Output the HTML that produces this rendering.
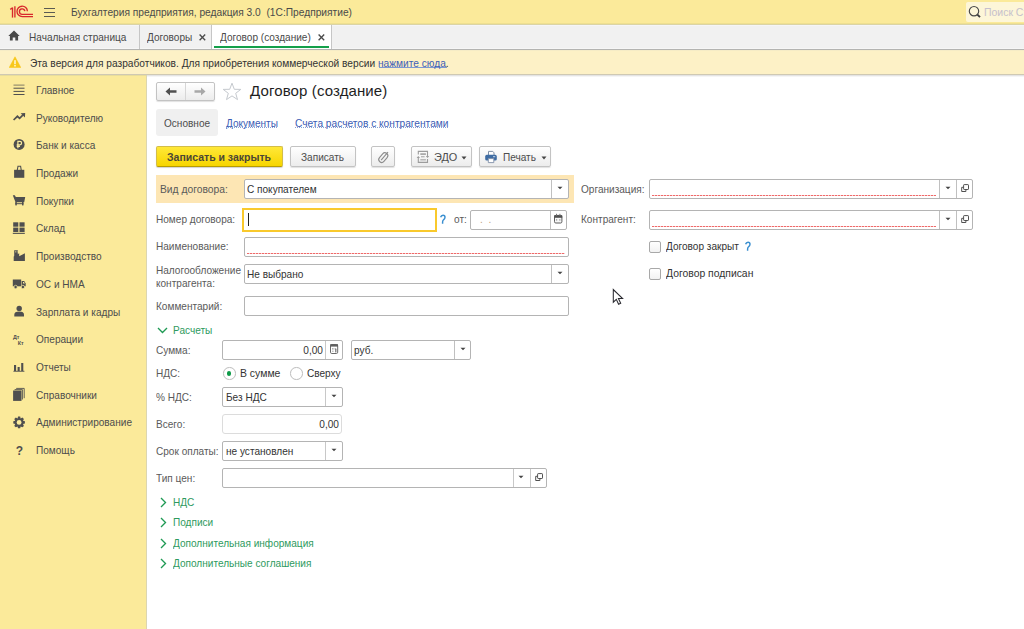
<!DOCTYPE html>
<html><head><meta charset="utf-8"><style>
html,body{margin:0;padding:0;width:1024px;height:629px;overflow:hidden;background:#fff;font-family:'Liberation Sans', sans-serif;}
.t{position:absolute;white-space:nowrap;font-family:'Liberation Sans', sans-serif;}
</style></head><body>
<div style="position:absolute;left:0px;top:0px;width:1024px;height:23px;background:#fbea9a"></div><div style="position:absolute;left:0px;top:23px;width:1024px;height:1px;background:#efe090"></div><div style="position:absolute;left:0px;top:24px;width:1024px;height:1px;background:#dbd4a6"></div><svg style="position:absolute;left:8px;top:4px;" width="28" height="16" viewBox="0 0 28 16"><g fill="none" stroke="#d8282c" stroke-width="1.35" stroke-linecap="butt">
<path d="M2.2 5.4 L4.6 3.9"/>
<path d="M4.5 3.6 L4.5 13.6"/>
<path d="M6.9 2.2 L6.9 13.6"/>
<path d="M19.4 7.2 A5.2 5.2 0 1 0 14.2 12.6 L25 12.6"/>
<path d="M16.8 7.2 A2.7 2.7 0 1 0 14.2 10.3 L25 10.3"/>
</g></svg><div style="position:absolute;left:44px;top:8px;width:11px;height:1px;background:#5a5a52"></div><div style="position:absolute;left:44px;top:12px;width:11px;height:1px;background:#5a5a52"></div><div style="position:absolute;left:44px;top:16px;width:11px;height:1px;background:#5a5a52"></div><div class="t" style="left:71px;top:6px;font-size:11px;line-height:13px;color:#4a4a4a;letter-spacing:0px;font-weight:normal;transform:scaleX(0.928);transform-origin:0 0;">Бухгалтерия предприятия, редакция 3.0&nbsp; (1С:Предприятие)</div><div style="position:absolute;left:966px;top:2px;width:58px;height:20px;background:#fdf6d8;border-radius:2px 0 0 2px"></div><svg style="position:absolute;left:968px;top:5px;" width="14" height="14" viewBox="0 0 14 14"><circle cx="6" cy="6.2" r="4.7" fill="none" stroke="#484848" stroke-width="1.15"/><path d="M9.4 9.6 L12 12.2" stroke="#3c3c3c" stroke-width="1.9"/></svg><div class="t" style="left:984px;top:6px;font-size:11px;line-height:13px;color:#c6c0cc;letter-spacing:0px;font-weight:normal;transform:scaleX(0.95);transform-origin:0 0;">Поиск Ст</div><div style="position:absolute;left:0px;top:25px;width:1024px;height:24px;background:#f1f1f1"></div><div style="position:absolute;left:0px;top:25px;width:1024px;height:1px;background:#f5f5f7"></div><div style="position:absolute;left:0px;top:48px;width:1024px;height:1px;background:#f6f6f6"></div><div style="position:absolute;left:0px;top:49px;width:1024px;height:1px;background:#b4b4b1"></div><div style="position:absolute;left:139px;top:25px;width:1px;height:24px;background:#c6c6c6"></div><div style="position:absolute;left:211px;top:25px;width:1px;height:24px;background:#c6c6c6"></div><div style="position:absolute;left:212px;top:25px;width:119px;height:24px;background:#fff"></div><div style="position:absolute;left:331px;top:25px;width:1px;height:24px;background:#c6c6c6"></div><div style="position:absolute;left:214px;top:46px;width:115px;height:2px;background:#14a04a"></div><svg style="position:absolute;left:8px;top:30px;" width="12" height="11" viewBox="0 0 12 11"><path d="M6 0.6 L11.7 5.9 L10.1 5.9 L10.1 10.4 L7.3 10.4 L7.3 7.4 L4.7 7.4 L4.7 10.4 L1.9 10.4 L1.9 5.9 L0.3 5.9 Z" fill="#484848"/></svg><div class="t" style="left:29px;top:31px;font-size:11px;line-height:13px;color:#4a4a4a;letter-spacing:0px;font-weight:normal;transform:scaleX(0.915);transform-origin:0 0;">Начальная страница</div><div class="t" style="left:147px;top:31px;font-size:11px;line-height:13px;color:#4a4a4a;letter-spacing:0px;font-weight:normal;transform:scaleX(0.915);transform-origin:0 0;">Договоры</div><svg style="position:absolute;left:199px;top:34px;" width="7" height="7" viewBox="0 0 7 7"><path d="M0.6 0.6 L6.2 6.2 M6.2 0.6 L0.6 6.2" stroke="#4a4a4a" stroke-width="1.35"/></svg><div class="t" style="left:220px;top:31px;font-size:11px;line-height:13px;color:#4a4a4a;letter-spacing:0px;font-weight:normal;transform:scaleX(0.915);transform-origin:0 0;">Договор (создание)</div><svg style="position:absolute;left:318px;top:34px;" width="7" height="7" viewBox="0 0 7 7"><path d="M0.6 0.6 L6.2 6.2 M6.2 0.6 L0.6 6.2" stroke="#4a4a4a" stroke-width="1.35"/></svg><div style="position:absolute;left:0px;top:50px;width:1024px;height:24px;background:#fdf1c6"></div><div style="position:absolute;left:0px;top:50px;width:1024px;height:1px;background:#f6ecc6"></div><div style="position:absolute;left:0px;top:74px;width:1024px;height:1px;background:#cfc9b3"></div><div style="position:absolute;left:379px;top:67px;width:68px;height:1px;background:#7c98d2"></div><svg style="position:absolute;left:9px;top:56px;" width="12" height="12" viewBox="0 0 12 12"><path d="M6 0.8 L11.8 11.6 L0.2 11.6 Z" fill="#f8c81c" stroke="#f8c81c" stroke-width="0.6" stroke-linejoin="round"/><rect x="5.2" y="4.2" width="1.6" height="4" fill="#fff6d0"/><rect x="5.2" y="9" width="1.6" height="1.5" fill="#fff6d0"/></svg><div class="t" style="left:30px;top:57px;font-size:11px;line-height:13px;color:#333;letter-spacing:0px;font-weight:normal;transform:scaleX(0.925);transform-origin:0 0;">Эта версия для разработчиков. Для приобретения коммерческой версии <span style="color:#3d60b6">нажмите сюда</span>.</div><div style="position:absolute;left:0px;top:75px;width:146px;height:554px;background:#fbea9a"></div><div style="position:absolute;left:146px;top:75px;width:1px;height:554px;background:#dcd6b0"></div><div style="position:absolute;left:0px;top:75px;width:146px;height:1px;background:#e8dd9c"></div><div class="t" style="left:36px;top:84px;font-size:11px;line-height:13px;color:#4d4d4d;letter-spacing:0px;font-weight:normal;transform:scaleX(0.915);transform-origin:0 0;">Главное</div><div class="t" style="left:36px;top:112px;font-size:11px;line-height:13px;color:#4d4d4d;letter-spacing:0px;font-weight:normal;transform:scaleX(0.915);transform-origin:0 0;">Руководителю</div><div class="t" style="left:36px;top:139px;font-size:11px;line-height:13px;color:#4d4d4d;letter-spacing:0px;font-weight:normal;transform:scaleX(0.915);transform-origin:0 0;">Банк и касса</div><div class="t" style="left:36px;top:167px;font-size:11px;line-height:13px;color:#4d4d4d;letter-spacing:0px;font-weight:normal;transform:scaleX(0.915);transform-origin:0 0;">Продажи</div><div class="t" style="left:36px;top:195px;font-size:11px;line-height:13px;color:#4d4d4d;letter-spacing:0px;font-weight:normal;transform:scaleX(0.915);transform-origin:0 0;">Покупки</div><div class="t" style="left:36px;top:222px;font-size:11px;line-height:13px;color:#4d4d4d;letter-spacing:0px;font-weight:normal;transform:scaleX(0.915);transform-origin:0 0;">Склад</div><div class="t" style="left:36px;top:250px;font-size:11px;line-height:13px;color:#4d4d4d;letter-spacing:0px;font-weight:normal;transform:scaleX(0.915);transform-origin:0 0;">Производство</div><div class="t" style="left:36px;top:278px;font-size:11px;line-height:13px;color:#4d4d4d;letter-spacing:0px;font-weight:normal;transform:scaleX(0.915);transform-origin:0 0;">ОС и НМА</div><div class="t" style="left:36px;top:306px;font-size:11px;line-height:13px;color:#4d4d4d;letter-spacing:0px;font-weight:normal;transform:scaleX(0.915);transform-origin:0 0;">Зарплата и кадры</div><div class="t" style="left:36px;top:333px;font-size:11px;line-height:13px;color:#4d4d4d;letter-spacing:0px;font-weight:normal;transform:scaleX(0.915);transform-origin:0 0;">Операции</div><div class="t" style="left:36px;top:361px;font-size:11px;line-height:13px;color:#4d4d4d;letter-spacing:0px;font-weight:normal;transform:scaleX(0.915);transform-origin:0 0;">Отчеты</div><div class="t" style="left:36px;top:389px;font-size:11px;line-height:13px;color:#4d4d4d;letter-spacing:0px;font-weight:normal;transform:scaleX(0.915);transform-origin:0 0;">Справочники</div><div class="t" style="left:36px;top:416px;font-size:11px;line-height:13px;color:#4d4d4d;letter-spacing:0px;font-weight:normal;transform:scaleX(0.915);transform-origin:0 0;">Администрирование</div><div class="t" style="left:36px;top:444px;font-size:11px;line-height:13px;color:#4d4d4d;letter-spacing:0px;font-weight:normal;transform:scaleX(0.915);transform-origin:0 0;">Помощь</div><svg style="position:absolute;left:0;top:0" width="146" height="629" viewBox="0 0 146 629"><g fill="#4f4f4f">
<rect x="13.5" y="84.6" width="11" height="1" opacity="0.7"/><rect x="13.5" y="87.7" width="11" height="1"/><rect x="13.5" y="90.9" width="11" height="1"/><rect x="13.5" y="94" width="11" height="1"/>
<path d="M13.6 120 L17.4 116.3 L19.6 118.4 L22.8 115.2" fill="none" stroke="#4f4f4f" stroke-width="1.7"/>
<path d="M20.6 113.2 L25.2 112.9 L24.9 117.4 Z"/>
<circle cx="19.1" cy="144.4" r="5.5"/>
<path d="M17.9 148.3 L17.9 141.4 L19.9 141.4 Q21.6 141.4 21.6 143.1 Q21.6 144.8 19.9 144.8 L16.7 144.8 M16.7 146.3 L20 146.3" fill="none" stroke="#fbec9e" stroke-width="1.2"/>
<path d="M14.1 169.8 L24.3 169.8 L24.3 177.8 L14.1 177.8 Z"/>
<path d="M17.2 170.5 L18 166.2 L20.6 166.2 L21.3 170.5" fill="none" stroke="#4f4f4f" stroke-width="1.1"/>
<path d="M12.8 195.3 L14.8 195.3 L15.8 197 L25.2 197 L24.2 202.2 L15.5 202.2 Z"/>
<rect x="15.3" y="202" width="1.5" height="3.4"/><rect x="22" y="202" width="1.5" height="3.4"/><rect x="15.3" y="203.2" width="8.2" height="1"/>
<rect x="13.2" y="222.3" width="5.1" height="4.4"/><rect x="19.5" y="222.3" width="5.1" height="4.4"/>
<rect x="13.2" y="227.6" width="5.1" height="4.4"/><rect x="19.5" y="227.6" width="5.1" height="4.4"/>
<rect x="12.8" y="232.8" width="12" height="1.1"/>
<path d="M13.7 260.9 L13.7 256.6 L19.2 253.2 L19.2 256.3 L24.9 253.2 L24.9 260.9 Z"/>
<path d="M14.2 250.3 L17.8 250.3 L17.8 255.3 L14.2 257.6 Z"/>
<rect x="15" y="251.3" width="0.9" height="1.1" fill="#fbec9e" opacity="0.8"/><rect x="16.6" y="251.3" width="0.9" height="1.1" fill="#fbec9e" opacity="0.8"/>
<rect x="12.8" y="279.5" width="8.4" height="6.8"/>
<path d="M21.7 281 L24.2 281 L25.7 283.4 L25.7 286.3 L21.7 286.3 Z"/>
<path d="M23 282 L24 282 L24.9 283.6 L23 283.6 Z" fill="#fbec9e"/>
<circle cx="15.6" cy="287" r="1.7" stroke="#fbec9e" stroke-width="0.7"/><circle cx="22.9" cy="287" r="1.7" stroke="#fbec9e" stroke-width="0.7"/>
<circle cx="19.2" cy="308.4" r="2.7"/>
<path d="M14.3 316.4 L14.3 314.8 Q14.3 311.5 19.2 311.5 Q24 311.5 24 314.8 L24 316.4 Z"/>
<text x="13" y="338.5" font-size="5.4" font-family="Liberation Sans" font-weight="bold">Дт</text>
<text x="17.8" y="344.8" font-size="5.4" font-family="Liberation Sans" font-weight="bold">Кт</text>
<rect x="14" y="365" width="2.1" height="6"/><rect x="17.6" y="367" width="2.1" height="4"/><rect x="21.2" y="363" width="2.1" height="8"/><rect x="13.4" y="370.8" width="11" height="0.9"/>
<rect x="13.1" y="390.5" width="8.4" height="10.4"/>
<path d="M14.6 389.6 L22.4 389.6 L22.4 399.5 M16.2 388.4 L24.2 388.4 L24.2 398.2" fill="none" stroke="#4f4f4f" stroke-width="0.9"/>
<g transform="translate(19.1 422.4)"><path d="M-1.1 -5.8 L1.1 -5.8 L1.5 -4 L3.3 -5 L4.8 -3.5 L3.9 -1.7 L5.8 -1.1 L5.8 1.1 L3.9 1.6 L4.8 3.5 L3.3 4.9 L1.5 4 L1.1 5.8 L-1.1 5.8 L-1.5 4 L-3.3 4.9 L-4.8 3.5 L-3.9 1.6 L-5.8 1.1 L-5.8 -1.1 L-3.9 -1.7 L-4.8 -3.5 L-3.3 -5 L-1.5 -4 Z"/><circle r="2.4" fill="#fbec9e"/></g>
<text x="15.8" y="454.8" font-size="12" font-family="Liberation Sans" font-weight="bold">?</text>
</g></svg><div style="position:absolute;left:147px;top:75px;width:877px;height:554px;background:#fff"></div><div style="position:absolute;left:147px;top:75px;width:877px;height:1px;background:#e4e4e4"></div><div style="position:absolute;left:147px;top:76px;width:877px;height:1px;background:#f5f5f5"></div><div style="position:absolute;left:156px;top:82px;width:59px;height:19px;background:linear-gradient(#ffffff,#ececec);border:1px solid #c3c3c3;border-radius:2px;box-shadow:0 1px 1px rgba(0,0,0,0.12);box-sizing:border-box"></div><div style="position:absolute;left:185px;top:83px;width:1px;height:17px;background:#d6d6d6"></div><svg style="position:absolute;left:165px;top:87px;" width="12" height="9" viewBox="0 0 12 9"><path d="M0.5 4.5 L5 0.5 L5 3.2 L11.5 3.2 L11.5 5.8 L5 5.8 L5 8.5 Z" fill="#505050"/></svg><svg style="position:absolute;left:194px;top:87px;" width="12" height="9" viewBox="0 0 12 9"><path d="M11.5 4.5 L7 0.5 L7 3.2 L0.5 3.2 L0.5 5.8 L7 5.8 L7 8.5 Z" fill="#a8a8a8"/></svg><svg style="position:absolute;left:222px;top:82px;" width="20" height="19" viewBox="0 0 20 19"><path d="M10 1.2 L12.3 7.3 L18.8 7.4 L13.7 11.3 L15.5 17.6 L10 13.9 L4.5 17.6 L6.3 11.3 L1.2 7.4 L7.7 7.3 Z" fill="none" stroke="#c5c9ce" stroke-width="1"/></svg><div class="t" style="left:250px;top:82px;font-size:15px;line-height:18px;color:#1e1e1e;letter-spacing:0.12px;font-weight:normal;">Договор (создание)</div><div style="position:absolute;left:156px;top:109px;width:62px;height:27px;background:#f0f0f0;border-radius:3px"></div><div class="t" style="left:164px;top:117px;font-size:11px;line-height:13px;color:#4d4d4d;letter-spacing:0px;font-weight:normal;transform:scaleX(0.915);transform-origin:0 0;">Основное</div><div class="t" style="left:226px;top:117px;font-size:11px;line-height:13px;color:#3b5cb4;letter-spacing:0px;font-weight:normal;transform:scaleX(0.915);transform-origin:0 0;">Документы</div><div class="t" style="left:295px;top:117px;font-size:11px;line-height:13px;color:#3b5cb4;letter-spacing:0px;font-weight:normal;transform:scaleX(0.924);transform-origin:0 0;">Счета расчетов с контрагентами</div><div style="position:absolute;left:226px;top:127px;width:52px;height:1px;background:repeating-linear-gradient(90deg,#8aa2d4 0 1px,transparent 1px 2px)"></div><div style="position:absolute;left:295px;top:127px;width:153px;height:1px;background:repeating-linear-gradient(90deg,#8aa2d4 0 1px,transparent 1px 2px)"></div><div style="position:absolute;left:156px;top:146px;width:127px;height:21px;background:linear-gradient(#ffe838,#f7d500);border:1px solid #d3bd48;border-bottom-color:#b89c00;border-radius:2px;box-shadow:0 1px 1px rgba(0,0,0,0.18);box-sizing:border-box"></div><div class="t" style="left:167px;top:151px;font-size:11px;line-height:13px;color:#4a4636;letter-spacing:0px;font-weight:bold;transform:scaleX(0.954);transform-origin:0 0;">Записать и закрыть</div><div style="position:absolute;left:290px;top:146px;width:66px;height:21px;background:linear-gradient(#ffffff,#ececec);border:1px solid #c3c3c3;border-radius:2px;box-shadow:0 1px 1px rgba(0,0,0,0.12);box-sizing:border-box"></div><div class="t" style="left:301px;top:151px;font-size:11px;line-height:13px;color:#4d4d4d;letter-spacing:0px;font-weight:normal;transform:scaleX(0.915);transform-origin:0 0;">Записать</div><div style="position:absolute;left:371px;top:146px;width:24px;height:21px;background:linear-gradient(#ffffff,#ececec);border:1px solid #c3c3c3;border-radius:2px;box-shadow:0 1px 1px rgba(0,0,0,0.12);box-sizing:border-box"></div><svg style="position:absolute;left:374px;top:148px;" width="18" height="18" viewBox="0 0 18 18"><g transform="translate(9.3 9.6) rotate(-50)"><rect x="-5.4" y="-2.9" width="10.8" height="5.8" rx="2.9" fill="none" stroke="#8c8c8c" stroke-width="1.1"/><path d="M-3.4 0 L7.2 0" stroke="#8c8c8c" stroke-width="1.1"/></g></svg><div style="position:absolute;left:411px;top:146px;width:61px;height:21px;background:linear-gradient(#ffffff,#ececec);border:1px solid #c3c3c3;border-radius:2px;box-shadow:0 1px 1px rgba(0,0,0,0.12);box-sizing:border-box"></div><svg style="position:absolute;left:414px;top:148px;" width="18" height="18" viewBox="0 0 18 18"><g fill="none" stroke="#9c9c9c" stroke-width="1.1"><path d="M4.3 6.5 L4.3 3.4 L13.5 3.4 L13.5 8"/><path d="M13.5 11 L13.5 14.4 L4.3 14.4 L4.3 10"/></g><g fill="#9c9c9c"><path d="M11.8 8 L15.2 8 L13.5 10 Z"/><path d="M2.6 10 L6 10 L4.3 8 Z"/><rect x="6.3" y="5.2" width="5.6" height="1.8" opacity="0.85"/><rect x="7" y="8.2" width="3.6" height="1.1" opacity="0.85"/><rect x="6.3" y="11.2" width="5.6" height="1.2" opacity="0.85"/></g></svg><div class="t" style="left:434px;top:151px;font-size:11px;line-height:13px;color:#4d4d4d;letter-spacing:0px;font-weight:normal;transform:scaleX(0.99);transform-origin:0 0;">ЭДО</div><svg style="position:absolute;left:461px;top:156px;" width="6" height="4" viewBox="0 0 6 4"><path d="M0.5 0.5 L5.5 0.5 L3 3.5 Z" fill="#444"/></svg><div style="position:absolute;left:479px;top:146px;width:72px;height:21px;background:linear-gradient(#ffffff,#ececec);border:1px solid #c3c3c3;border-radius:2px;box-shadow:0 1px 1px rgba(0,0,0,0.12);box-sizing:border-box"></div><svg style="position:absolute;left:482px;top:148px;" width="18" height="18" viewBox="0 0 18 18"><path d="M6.5 7 L6.5 3.4 L10.8 3.4 L12 4.8 L12 7" fill="#fff" stroke="#7d8ea6" stroke-width="1"/><rect x="3.2" y="6.8" width="11.6" height="5.8" rx="1.6" fill="#3f6ca3"/><rect x="11" y="8.2" width="2.2" height="1" fill="#c8d6e8"/><path d="M6.3 10.6 L11.8 10.6 L11.8 14.6 L6.3 14.6 Z" fill="#fff" stroke="#8090a8" stroke-width="0.9"/></svg><div class="t" style="left:503px;top:151px;font-size:11px;line-height:13px;color:#4d4d4d;letter-spacing:0px;font-weight:normal;transform:scaleX(0.915);transform-origin:0 0;">Печать</div><svg style="position:absolute;left:541px;top:156px;" width="6" height="4" viewBox="0 0 6 4"><path d="M0.5 0.5 L5.5 0.5 L3 3.5 Z" fill="#444"/></svg><div style="position:absolute;left:156px;top:175px;width:418px;height:28px;background:#fde6b4"></div><div class="t" style="left:160px;top:183px;font-size:11px;line-height:13px;color:#5a5a5a;letter-spacing:0px;font-weight:normal;transform:scaleX(0.935);transform-origin:0 0;">Вид договора:</div><div style="position:absolute;left:244px;top:179px;width:325px;height:20px;background:#fff;border:1px solid #b4b4b4;border-radius:2px;box-sizing:border-box"></div><div style="position:absolute;left:551px;top:180px;width:1px;height:18px;background:#c0c0c0"></div><svg style="position:absolute;left:557px;top:186px;" width="6" height="4" viewBox="0 0 6 4"><path d="M0.5 0.8 L5.5 0.8 L3 3.3 Z" fill="#444"/></svg><div class="t" style="left:247px;top:183px;font-size:11px;line-height:13px;color:#333333;letter-spacing:0px;font-weight:normal;transform:scaleX(0.915);transform-origin:0 0;">С покупателем</div><div class="t" style="left:156px;top:213px;font-size:11px;line-height:13px;color:#5a5a5a;letter-spacing:0px;font-weight:normal;transform:scaleX(0.915);transform-origin:0 0;">Номер договора:</div><div style="position:absolute;left:242px;top:208px;width:195px;height:24px;border:2px solid #f9c92c;background:#fff;box-sizing:border-box"></div><div style="position:absolute;left:248px;top:213px;width:1px;height:13px;background:#222"></div><svg style="position:absolute;left:439px;top:214px;" width="8" height="11" viewBox="0 0 8 11"><path d="M1.6 3.3 Q2.2 1.2 4 1.2 Q6 1.2 6 3.3 Q6 4.8 4.5 5.8 Q3.6 6.5 3.6 8 L3.6 9.8" fill="none" stroke="#3a8fd0" stroke-width="1.45"/></svg><div class="t" style="left:454px;top:213px;font-size:11px;line-height:13px;color:#5a5a5a;letter-spacing:0px;font-weight:normal;transform:scaleX(0.915);transform-origin:0 0;">от:</div><div style="position:absolute;left:470px;top:210px;width:97px;height:20px;background:#fff;border:1px solid #b4b4b4;border-radius:2px;box-sizing:border-box"></div><div style="position:absolute;left:550px;top:211px;width:1px;height:18px;background:#c0c0c0"></div><div class="t" style="left:480px;top:213px;font-size:11px;line-height:13px;color:#c0a080;letter-spacing:0px;font-weight:normal;transform:scaleX(0.915);transform-origin:0 0;">.&nbsp;&nbsp;.</div><svg style="position:absolute;left:553px;top:213px;" width="10" height="11" viewBox="0 0 10 11"><rect x="1.5" y="2.4" width="7.4" height="7.6" rx="1.3" fill="#f6f6f6" stroke="#5c5c5c" stroke-width="1"/><rect x="1.2" y="2.2" width="8" height="2.6" fill="#505050"/><rect x="3" y="0.8" width="1" height="2" fill="#777"/><rect x="6.4" y="0.8" width="1" height="2" fill="#777"/><rect x="3" y="6.3" width="1.2" height="1.2" fill="#8a8a8a"/><rect x="6.2" y="6.3" width="1.2" height="1.2" fill="#8a8a8a"/></svg><div class="t" style="left:156px;top:240px;font-size:11px;line-height:13px;color:#5a5a5a;letter-spacing:0px;font-weight:normal;transform:scaleX(0.915);transform-origin:0 0;">Наименование:</div><div style="position:absolute;left:244px;top:237px;width:325px;height:20px;background:#fff;border:1px solid #b4b4b4;border-radius:2px;box-sizing:border-box"></div><div style="position:absolute;left:247px;top:253px;width:318px;height:1px;background:repeating-linear-gradient(90deg,#ef6a6a 0 2px,#f9d0d0 2px 3px)"></div><div class="t" style="left:156px;top:264px;font-size:11px;line-height:13px;color:#5a5a5a;letter-spacing:0px;font-weight:normal;transform:scaleX(0.915);transform-origin:0 0;">Налогообложение</div><div class="t" style="left:156px;top:277px;font-size:11px;line-height:13px;color:#5a5a5a;letter-spacing:0px;font-weight:normal;transform:scaleX(0.915);transform-origin:0 0;">контрагента:</div><div style="position:absolute;left:244px;top:264px;width:325px;height:20px;background:#fff;border:1px solid #b4b4b4;border-radius:2px;box-sizing:border-box"></div><div style="position:absolute;left:551px;top:265px;width:1px;height:18px;background:#c0c0c0"></div><svg style="position:absolute;left:557px;top:271px;" width="6" height="4" viewBox="0 0 6 4"><path d="M0.5 0.8 L5.5 0.8 L3 3.3 Z" fill="#444"/></svg><div class="t" style="left:247px;top:268px;font-size:11px;line-height:13px;color:#333333;letter-spacing:0px;font-weight:normal;transform:scaleX(0.915);transform-origin:0 0;">Не выбрано</div><div class="t" style="left:156px;top:300px;font-size:11px;line-height:13px;color:#5a5a5a;letter-spacing:0px;font-weight:normal;transform:scaleX(0.915);transform-origin:0 0;">Комментарий:</div><div style="position:absolute;left:244px;top:296px;width:325px;height:20px;background:#fff;border:1px solid #b4b4b4;border-radius:2px;box-sizing:border-box"></div><div class="t" style="left:581px;top:183px;font-size:11px;line-height:13px;color:#5a5a5a;letter-spacing:0px;font-weight:normal;transform:scaleX(0.915);transform-origin:0 0;">Организация:</div><div style="position:absolute;left:649px;top:179px;width:324px;height:20px;background:#fff;border:1px solid #b4b4b4;border-radius:2px;box-sizing:border-box"></div><div style="position:absolute;left:939px;top:180px;width:1px;height:18px;background:#c0c0c0"></div><div style="position:absolute;left:956px;top:180px;width:1px;height:18px;background:#c0c0c0"></div><svg style="position:absolute;left:945px;top:186px;" width="6" height="4" viewBox="0 0 6 4"><path d="M0.5 0.8 L5.5 0.8 L3 3.3 Z" fill="#444"/></svg><svg style="position:absolute;left:961px;top:184px;" width="9" height="9" viewBox="0 0 9 9"><g fill="none" stroke="#505050" stroke-width="1"><path d="M2.6 3.3 L0.7 3.3 L0.7 7.5 L4.9 7.5 L4.9 5.6"/><rect x="2.6" y="0.6" width="4.9" height="4.9" rx="0.6"/></g></svg><div style="position:absolute;left:652px;top:195px;width:284px;height:1px;background:repeating-linear-gradient(90deg,#ef6a6a 0 2px,#f9d0d0 2px 3px)"></div><div class="t" style="left:581px;top:213px;font-size:11px;line-height:13px;color:#5a5a5a;letter-spacing:0px;font-weight:normal;transform:scaleX(0.915);transform-origin:0 0;">Контрагент:</div><div style="position:absolute;left:649px;top:210px;width:324px;height:20px;background:#fff;border:1px solid #b4b4b4;border-radius:2px;box-sizing:border-box"></div><div style="position:absolute;left:939px;top:211px;width:1px;height:18px;background:#c0c0c0"></div><div style="position:absolute;left:956px;top:211px;width:1px;height:18px;background:#c0c0c0"></div><svg style="position:absolute;left:945px;top:217px;" width="6" height="4" viewBox="0 0 6 4"><path d="M0.5 0.8 L5.5 0.8 L3 3.3 Z" fill="#444"/></svg><svg style="position:absolute;left:961px;top:215px;" width="9" height="9" viewBox="0 0 9 9"><g fill="none" stroke="#505050" stroke-width="1"><path d="M2.6 3.3 L0.7 3.3 L0.7 7.5 L4.9 7.5 L4.9 5.6"/><rect x="2.6" y="0.6" width="4.9" height="4.9" rx="0.6"/></g></svg><div style="position:absolute;left:652px;top:226px;width:284px;height:1px;background:repeating-linear-gradient(90deg,#ef6a6a 0 2px,#f9d0d0 2px 3px)"></div><div style="position:absolute;left:649px;top:241px;width:12px;height:12px;background:linear-gradient(#fff,#f2f2f2);border:1px solid #a8a8a8;border-radius:2px;box-sizing:border-box"></div><div class="t" style="left:666px;top:240px;font-size:11px;line-height:13px;color:#333333;letter-spacing:0px;font-weight:normal;transform:scaleX(0.915);transform-origin:0 0;">Договор закрыт</div><svg style="position:absolute;left:744px;top:241px;" width="8" height="11" viewBox="0 0 8 11"><path d="M1.6 3.3 Q2.2 1.2 4 1.2 Q6 1.2 6 3.3 Q6 4.8 4.5 5.8 Q3.6 6.5 3.6 8 L3.6 9.8" fill="none" stroke="#3a8fd0" stroke-width="1.45"/></svg><div style="position:absolute;left:649px;top:268px;width:12px;height:12px;background:linear-gradient(#fff,#f2f2f2);border:1px solid #a8a8a8;border-radius:2px;box-sizing:border-box"></div><div class="t" style="left:666px;top:267px;font-size:11px;line-height:13px;color:#333333;letter-spacing:0px;font-weight:normal;transform:scaleX(0.943);transform-origin:0 0;">Договор подписан</div><svg style="position:absolute;left:612px;top:288px;" width="12" height="18" viewBox="0 0 12 18"><path d="M1.3 1.5 L1.3 14.2 L4.3 11.3 L6.6 16.2 L8.7 15.3 L6.4 10.5 L10.6 10.5 Z" fill="#fff" stroke="#2a2a30" stroke-width="1.05" stroke-linejoin="miter"/></svg><svg style="position:absolute;left:157px;top:327px;" width="11" height="7" viewBox="0 0 11 7"><path d="M1 1 L5.5 5.5 L10 1" fill="none" stroke="#1f9a54" stroke-width="1.35"/></svg><div class="t" style="left:173px;top:324px;font-size:11px;line-height:13px;color:#2e9a5e;letter-spacing:0px;font-weight:normal;transform:scaleX(0.915);transform-origin:0 0;">Расчеты</div><div class="t" style="left:156px;top:344px;font-size:11px;line-height:13px;color:#5a5a5a;letter-spacing:0px;font-weight:normal;transform:scaleX(0.915);transform-origin:0 0;">Сумма:</div><div style="position:absolute;left:222px;top:340px;width:121px;height:20px;background:#fff;border:1px solid #b4b4b4;border-radius:2px;box-sizing:border-box"></div><div style="position:absolute;left:325px;top:341px;width:1px;height:18px;background:#c8c8c8"></div><div class="t" style="left:260px;top:344px;width:63px;text-align:right;font-size:11px;line-height:13px;color:#333;transform:scaleX(0.92);transform-origin:100% 0">0,00</div><svg style="position:absolute;left:329px;top:343px;" width="10" height="12" viewBox="0 0 10 12"><rect x="1.5" y="1.5" width="7.2" height="9" rx="1.3" fill="#fff" stroke="#6a6a6a" stroke-width="1"/><rect x="1.2" y="1.2" width="7.8" height="2.4" fill="#606060"/><rect x="3" y="5" width="1.6" height="1.6" fill="#b0b0b0"/><rect x="5.6" y="5" width="1.6" height="1.6" fill="#b0b0b0"/><rect x="3" y="7.6" width="1.6" height="1.4" fill="#c0c0c0"/><rect x="6.2" y="6" width="1.2" height="3.4" fill="#707070"/></svg><div style="position:absolute;left:351px;top:340px;width:120px;height:20px;background:#fff;border:1px solid #b4b4b4;border-radius:2px;box-sizing:border-box"></div><div style="position:absolute;left:454px;top:341px;width:1px;height:18px;background:#c0c0c0"></div><svg style="position:absolute;left:460px;top:347px;" width="6" height="4" viewBox="0 0 6 4"><path d="M0.5 0.8 L5.5 0.8 L3 3.3 Z" fill="#444"/></svg><div class="t" style="left:354px;top:344px;font-size:11px;line-height:13px;color:#333333;letter-spacing:0px;font-weight:normal;transform:scaleX(0.915);transform-origin:0 0;">руб.</div><div class="t" style="left:156px;top:367px;font-size:11px;line-height:13px;color:#5a5a5a;letter-spacing:0px;font-weight:normal;transform:scaleX(0.915);transform-origin:0 0;">НДС:</div><div style="position:absolute;left:223px;top:367px;width:12.5px;height:12.5px;background:#fff;border:1px solid #bdbdbd;border-radius:50%;box-sizing:border-box"></div><div style="position:absolute;left:227.3px;top:371.4px;width:4.2px;height:4.2px;background:#0f9a48;border-radius:50%"></div><div class="t" style="left:240px;top:367px;font-size:11px;line-height:13px;color:#333333;letter-spacing:0px;font-weight:normal;transform:scaleX(0.95);transform-origin:0 0;">В сумме</div><div style="position:absolute;left:290px;top:367px;width:12.5px;height:12.5px;background:#fff;border:1px solid #bdbdbd;border-radius:50%;box-sizing:border-box"></div><div class="t" style="left:307px;top:367px;font-size:11px;line-height:13px;color:#333333;letter-spacing:0px;font-weight:normal;transform:scaleX(0.915);transform-origin:0 0;">Сверху</div><div class="t" style="left:156px;top:391px;font-size:11px;line-height:13px;color:#5a5a5a;letter-spacing:0px;font-weight:normal;transform:scaleX(0.915);transform-origin:0 0;">% НДС:</div><div style="position:absolute;left:222px;top:387px;width:121px;height:20px;background:#fff;border:1px solid #b4b4b4;border-radius:2px;box-sizing:border-box"></div><div style="position:absolute;left:325px;top:388px;width:1px;height:18px;background:#c8c8c8"></div><svg style="position:absolute;left:331px;top:394px;" width="6" height="4" viewBox="0 0 6 4"><path d="M0.5 0.8 L5.5 0.8 L3 3.3 Z" fill="#444"/></svg><div class="t" style="left:226px;top:391px;font-size:11px;line-height:13px;color:#333333;letter-spacing:0px;font-weight:normal;transform:scaleX(0.915);transform-origin:0 0;">Без НДС</div><div class="t" style="left:156px;top:418px;font-size:11px;line-height:13px;color:#5a5a5a;letter-spacing:0px;font-weight:normal;transform:scaleX(0.915);transform-origin:0 0;">Всего:</div><div style="position:absolute;left:222px;top:414px;width:120px;height:20px;background:#fff;border:1px solid #dcdcdc;border-radius:3px;box-sizing:border-box"></div><div class="t" style="left:260px;top:418px;width:79px;text-align:right;font-size:11px;line-height:13px;color:#333;transform:scaleX(0.92);transform-origin:100% 0">0,00</div><div class="t" style="left:156px;top:445px;font-size:11px;line-height:13px;color:#5a5a5a;letter-spacing:0px;font-weight:normal;transform:scaleX(0.915);transform-origin:0 0;">Срок оплаты:</div><div style="position:absolute;left:222px;top:441px;width:121px;height:20px;background:#fff;border:1px solid #b4b4b4;border-radius:2px;box-sizing:border-box"></div><div style="position:absolute;left:325px;top:442px;width:1px;height:18px;background:#c8c8c8"></div><svg style="position:absolute;left:331px;top:448px;" width="6" height="4" viewBox="0 0 6 4"><path d="M0.5 0.8 L5.5 0.8 L3 3.3 Z" fill="#444"/></svg><div class="t" style="left:226px;top:445px;font-size:11px;line-height:13px;color:#333333;letter-spacing:0px;font-weight:normal;transform:scaleX(0.915);transform-origin:0 0;">не установлен</div><div class="t" style="left:156px;top:472px;font-size:11px;line-height:13px;color:#5a5a5a;letter-spacing:0px;font-weight:normal;transform:scaleX(0.915);transform-origin:0 0;">Тип цен:</div><div style="position:absolute;left:222px;top:468px;width:325px;height:20px;background:#fff;border:1px solid #b4b4b4;border-radius:2px;box-sizing:border-box"></div><div style="position:absolute;left:513px;top:469px;width:1px;height:18px;background:#c8c8c8"></div><div style="position:absolute;left:530px;top:469px;width:1px;height:18px;background:#c8c8c8"></div><svg style="position:absolute;left:518px;top:475px;" width="6" height="4" viewBox="0 0 6 4"><path d="M0.5 0.8 L5.5 0.8 L3 3.3 Z" fill="#444"/></svg><svg style="position:absolute;left:535px;top:473px;" width="9" height="9" viewBox="0 0 9 9"><g fill="none" stroke="#505050" stroke-width="1"><path d="M2.6 3.3 L0.7 3.3 L0.7 7.5 L4.9 7.5 L4.9 5.6"/><rect x="2.6" y="0.6" width="4.9" height="4.9" rx="0.6"/></g></svg><svg style="position:absolute;left:160px;top:497px;" width="7" height="11" viewBox="0 0 7 11"><path d="M1 1 L5.5 5.5 L1 10" fill="none" stroke="#1f9a54" stroke-width="1.35"/></svg><div class="t" style="left:173px;top:496px;font-size:11px;line-height:13px;color:#2e9a5e;letter-spacing:0px;font-weight:normal;transform:scaleX(0.915);transform-origin:0 0;">НДС</div><svg style="position:absolute;left:160px;top:517px;" width="7" height="11" viewBox="0 0 7 11"><path d="M1 1 L5.5 5.5 L1 10" fill="none" stroke="#1f9a54" stroke-width="1.35"/></svg><div class="t" style="left:173px;top:516px;font-size:11px;line-height:13px;color:#2e9a5e;letter-spacing:0px;font-weight:normal;transform:scaleX(0.915);transform-origin:0 0;">Подписи</div><svg style="position:absolute;left:160px;top:538px;" width="7" height="11" viewBox="0 0 7 11"><path d="M1 1 L5.5 5.5 L1 10" fill="none" stroke="#1f9a54" stroke-width="1.35"/></svg><div class="t" style="left:173px;top:537px;font-size:11px;line-height:13px;color:#2e9a5e;letter-spacing:0px;font-weight:normal;transform:scaleX(0.915);transform-origin:0 0;">Дополнительная информация</div><svg style="position:absolute;left:160px;top:558px;" width="7" height="11" viewBox="0 0 7 11"><path d="M1 1 L5.5 5.5 L1 10" fill="none" stroke="#1f9a54" stroke-width="1.35"/></svg><div class="t" style="left:173px;top:557px;font-size:11px;line-height:13px;color:#2e9a5e;letter-spacing:0px;font-weight:normal;transform:scaleX(0.915);transform-origin:0 0;">Дополнительные соглашения</div>
</body></html>
